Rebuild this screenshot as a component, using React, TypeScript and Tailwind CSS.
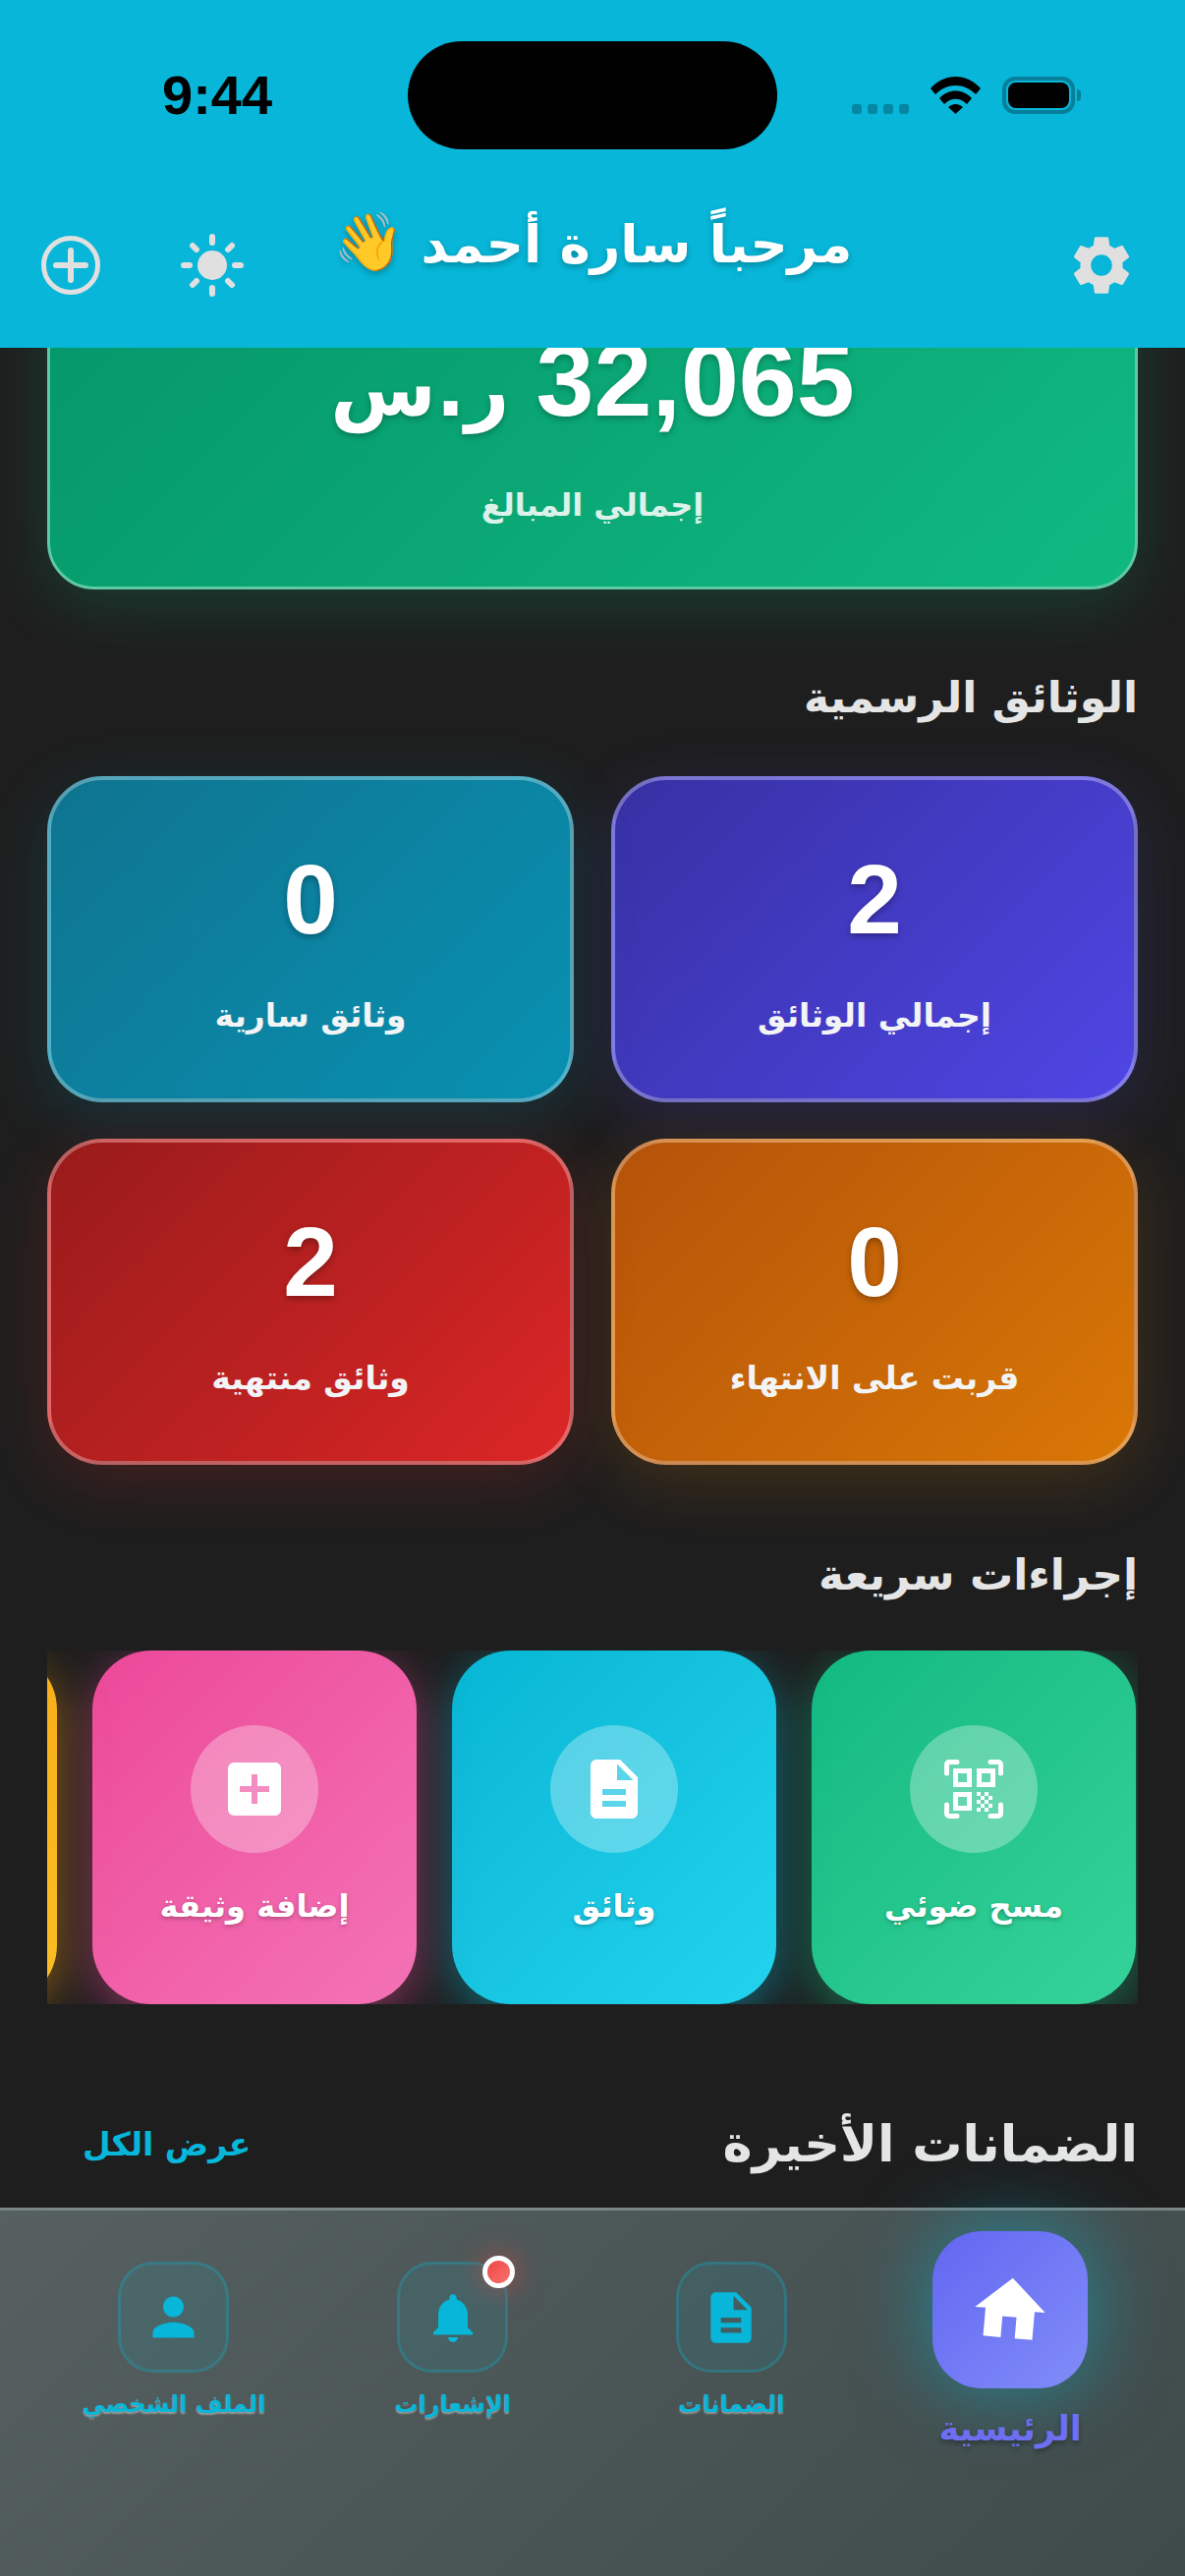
import { MdAddBox, MdDescription, MdHome, MdNotifications, MdPerson, MdSettings } from "react-icons/md";
import type { ReactNode } from "react";

const ar = "font-['DejaVu_Sans','Noto_Sans',sans-serif]";

function SectionTitle({ children }: { children: ReactNode }) {
  return <h2 className="text-[44px] leading-[60px] font-bold text-[#e5e5e5]">{children}</h2>;
}

function PlusIcon() {
  return (
    <svg width="60" height="60" viewBox="0 0 60 60" fill="none" stroke="#e0e0e0" strokeLinecap="round">
      <circle cx="30" cy="30" r="27.500" strokeWidth="5" />
      <path d="M15 30h30M30 15v30" strokeWidth="6" />
    </svg>
  );
}

function SunIcon() {
  return (
    <svg width="66" height="66" viewBox="0 0 66 66" fill="#e0e0e0" stroke="#e0e0e0" strokeWidth="6" strokeLinecap="round">
      <circle cx="33" cy="33" r="15" stroke="none" />
      <path d="M33 4v6M33 56v6M4 33h6M56 33h6M13 13l4 4M49 49l4 4M13 53l4-4M49 17l4-4" />
    </svg>
  );
}

function QrIcon() {
  const tiles = [[33, 33], [41, 33], [37, 37], [45, 37], [33, 41], [41, 41], [37, 45], [45, 45], [33, 49], [41, 49]];
  return (
    <svg width="60" height="60" viewBox="0 0 60 60" fill="none">
      <path d="M2.5 14V5a2.5 2.5 0 0 1 2.5-2.5h8M47 2.5h8a2.5 2.5 0 0 1 2.5 2.5v9M2.5 46v9a2.5 2.5 0 0 0 2.5 2.5h8M57.5 46v9a2.5 2.5 0 0 1-2.5 2.5h-8" stroke="white" strokeWidth="5" strokeLinecap="round" />
      <rect x="11.5" y="11.5" width="14" height="14" stroke="white" strokeWidth="5" />
      <rect x="35.5" y="11.5" width="14" height="14" stroke="white" strokeWidth="5" />
      <rect x="11.5" y="35.5" width="14" height="14" stroke="white" strokeWidth="5" />
      {tiles.map(([x, y]) => (
        <rect key={`${x}-${y}`} x={x} y={y} width="4" height="4" fill="white" />
      ))}
    </svg>
  );
}

const stats = [
  { value: "2", label: "إجمالي الوثائق", bg: "bg-linear-135 from-[#3730a3] to-[#4f46e5]", glow: "shadow-[0_16px_64px_rgba(79,70,229,0.2)]" },
  { value: "0", label: "وثائق سارية", bg: "bg-linear-135 from-[#0e7490] to-[#0891b2]", glow: "shadow-[0_16px_64px_rgba(8,145,178,0.2)]" },
  { value: "0", label: "قربت على الانتهاء", bg: "bg-linear-135 from-[#b45309] to-[#d97706]", glow: "shadow-[0_16px_64px_rgba(217,119,6,0.2)]" },
  { value: "2", label: "وثائق منتهية", bg: "bg-linear-135 from-[#991b1b] to-[#dc2626]", glow: "shadow-[0_16px_64px_rgba(220,38,38,0.2)]" },
];

const actions = [
  { label: "مسح ضوئي", icon: <QrIcon />, bg: "bg-linear-135 from-[#10b981] to-[#34d399]", glow: "shadow-[0_12px_48px_rgba(16,185,129,0.5)]" },
  { label: "وثائق", icon: <MdDescription size={72} />, bg: "bg-linear-135 from-[#06b6d4] to-[#22d3ee]", glow: "shadow-[0_12px_48px_rgba(6,182,212,0.5)]" },
  { label: "إضافة وثيقة", icon: <MdAddBox size={72} />, bg: "bg-linear-135 from-[#ec4899] to-[#f472b6]", glow: "shadow-[0_12px_48px_rgba(236,72,153,0.5)]" },
];

const navItems = [
  { label: "الضمانات", icon: <MdDescription size={62} /> },
  { label: "الإشعارات", icon: <MdNotifications size={60} />, badge: true },
  { label: "الملف الشخصي", icon: <MdPerson size={63} /> },
];

export default function App() {
  return (
    <div dir="rtl" className={`${ar} relative w-[1206px] h-[2622px] overflow-hidden bg-[#1e1e1e] flex flex-col`}>
      <header className="h-[354px] shrink-0 bg-[#07b6d8] relative z-10">
        <div dir="ltr" className="h-[220px] relative flex items-start justify-between pl-[165px] pr-[106px] pt-[42px]">
          <span className="font-['Liberation_Sans',sans-serif] font-bold text-[56px] leading-[110px] text-black">9:44</span>
          <div className="w-[376px] h-[110px] rounded-[55px] bg-black absolute left-[415px] top-[42px]" />
          <div className="flex items-center gap-[22px] h-[110px]">
            <div className="flex gap-[6px] mt-[28px]">
              <span className="w-[10px] h-[10px] rounded-[3px] bg-[#0686a2]" />
              <span className="w-[10px] h-[10px] rounded-[3px] bg-[#0686a2]" />
              <span className="w-[10px] h-[10px] rounded-[3px] bg-[#0686a2]" />
              <span className="w-[10px] h-[10px] rounded-[3px] bg-[#0686a2]" />
            </div>
            <svg width="51" height="38" viewBox="0 0 51 38" fill="black">
              <path d="M0 12C14-4 37-4 51 12l-5 6C34 6 17 6 5 18z" />
              <path d="M9 22c9-10 24-10 33 0l-5 6c-7-7-16-7-23 0z" />
              <path d="M18 31c5-4 10-4 15 0l-7.500 7z" />
            </svg>
            <div className="flex items-center gap-[2px]">
              <div className="w-[74px] h-[38px] rounded-[13px] border-[4px] border-[#067f9b] p-[2px]">
                <div className="w-full h-full bg-black rounded-[8px]" />
              </div>
              <span className="w-[4px] h-[12px] bg-[#067f9b] rounded-r-full" />
            </div>
          </div>
        </div>
        <div dir="ltr" className="grid grid-cols-[1fr_auto_1fr] items-center pl-[42px] pr-[52px] h-[100px]">
          <div className="flex items-center gap-[81px]">
            <PlusIcon />
            <SunIcon />
          </div>
          <h1 dir="rtl" className="-translate-y-[21px] translate-x-[5px] text-[53px] leading-[70px] font-bold text-white flex flex-row-reverse items-center gap-[18px] [text-shadow:0_3px_6px_rgba(0,0,0,0.25)]">
            <span className="text-[58px] -translate-y-[3px]">👋</span>
            <span>مرحباً سارة أحمد</span>
          </h1>
          <div className="flex justify-end">
            <MdSettings size={72} className="text-[#e0e0e0] -mr-[3px]" />
          </div>
        </div>
      </header>

      <main className="flex-1 overflow-hidden px-[48px]">
        <section className="mt-[-100px] h-[346px] rounded-[48px] border-[3px] border-[#5fc9a4] bg-linear-135 from-[#059669] to-[#10b981] shadow-[0_16px_64px_rgba(16,185,129,0.2)] flex flex-col items-center pt-[69px]">
          <p className="h-[120px] leading-[120px] whitespace-nowrap font-bold text-white [text-shadow:0_3px_6px_rgba(0,0,0,0.25)]">
            <span className="text-[106px] [letter-spacing:4px] font-['Liberation_Sans',sans-serif]">32,065</span>
            <span className="text-[78px]"> ر.س</span>
          </p>
          <p className="text-[32px] leading-[50px] mt-[43px] font-bold text-white/85">إجمالي المبالغ</p>
        </section>

        <div className="mt-[80px]"><SectionTitle>الوثائق الرسمية</SectionTitle></div>
        <div className="grid grid-cols-2 gap-x-[38px] gap-y-[37px] mt-[50px]">
          {stats.map((s) => (
            <div key={s.label} className={`h-[332px] rounded-[56px] border-[4px] border-white/30 flex flex-col items-center ${s.bg} ${s.glow}`}>
              <span className="mt-[61px] text-[100px] leading-[120px] font-bold text-white font-['Liberation_Sans',sans-serif] [text-shadow:0_3px_6px_rgba(0,0,0,0.3)]">{s.value}</span>
              <span className="mt-[34px] text-[33px] leading-[50px] font-bold text-[#f3f4f6]">{s.label}</span>
            </div>
          ))}
        </div>

        <div className="mt-[82px]"><SectionTitle>إجراءات سريعة</SectionTitle></div>
        <div className="mt-[47px] h-[360px] flex gap-[36px] overflow-hidden pr-[2px]">
          {actions.map((a) => (
            <div key={a.label} className={`w-[330px] h-[360px] shrink-0 rounded-[60px] flex flex-col items-center ${a.bg} ${a.glow}`}>
              <div className="mt-[76px] w-[130px] h-[130px] rounded-full bg-white/30 flex items-center justify-center text-white">{a.icon}</div>
              <span className="mt-[29px] text-[32px] leading-[50px] font-bold text-white [text-shadow:0_2px_4px_rgba(0,0,0,0.25)]">{a.label}</span>
            </div>
          ))}
          <div className="w-[330px] h-[360px] shrink-0 rounded-[60px] bg-linear-135 from-[#f59e0b] to-[#fbbf24] shadow-[0_12px_48px_rgba(245,158,11,0.5)]" />
        </div>

        <div className="mt-[108px] flex items-center justify-between pl-[36px]">
          <h2 className="text-[51px] leading-[70px] font-bold text-[#e5e5e5]">الضمانات الأخيرة</h2>
          <span className="text-[33px] leading-[50px] text-[#07b6d8] font-bold">عرض الكل</span>
        </div>
      </main>

      <nav className="absolute left-0 right-0 bottom-0 h-[375px] border-t-[3px] border-[#7a8585] bg-linear-135 from-[#566060] to-[#3f4a4a] grid grid-cols-4 items-start pr-[36px] pl-[35px]">
        <div className="mt-[21px] flex flex-col items-center">
          <div className="w-[158px] h-[160px] rounded-[50px] bg-linear-135 from-[#6366f1] to-[#818cf8] text-white flex items-center justify-center shadow-[0_0_80px_rgba(6,182,212,0.55)]">
            <MdHome size={86} className="rotate-[5deg]" />
          </div>
          <span className="mt-[16px] text-[35px] leading-[50px] font-bold text-[#6d6ff0] whitespace-nowrap [text-shadow:0_3px_5px_rgba(0,0,0,0.3)]">الرئيسية</span>
        </div>
        {navItems.map((n) => (
          <div key={n.label} className="mt-[52px] flex flex-col items-center">
            <div className="relative w-[113px] h-[113px] rounded-[36px] border-[3px] border-[#07b6d8]/25 bg-[#07b6d8]/10 text-[#07b6d8] flex items-center justify-center">
              {n.icon}
              {n.badge && <span className="absolute -top-[9px] -right-[10px] w-[33px] h-[33px] rounded-full border-[5px] border-white bg-linear-135 from-[#ef4444] to-[#f87171] shadow-[0_0_30px_rgba(239,68,68,0.6)]" />}
            </div>
            <span className="mt-[12px] text-[24px] leading-[40px] font-bold text-[#07b6d8] whitespace-nowrap [text-shadow:0_2px_2px_rgba(255,255,255,0.4)]">{n.label}</span>
          </div>
        ))}
      </nav>
    </div>
  );
}
